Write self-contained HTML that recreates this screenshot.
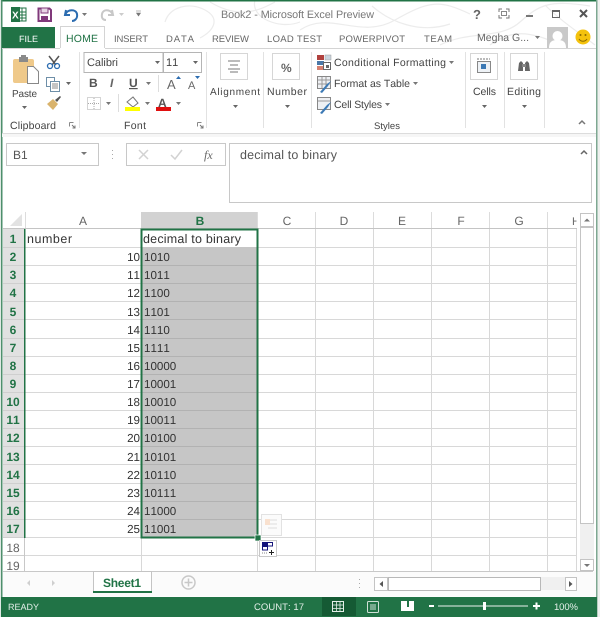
<!DOCTYPE html>
<html><head><meta charset="utf-8"><title>Book2 - Microsoft Excel Preview</title>
<style>
html,body{margin:0;padding:0;background:#fff;width:600px;height:617px;overflow:hidden}
svg{display:block;position:absolute;left:0;top:0;filter:blur(.35px)}
text{font-family:"Liberation Sans",sans-serif;font-size:11px;fill:#555;font-kerning:none;text-rendering:geometricPrecision}
.t{font-size:9.5px;fill:#666}
.r{font-size:10.5px;fill:#444}
.c{font-size:11.6px;fill:#333}
.h{font-size:12px;fill:#666;text-anchor:middle}
.rh{font-size:12px;fill:#217346;font-weight:bold;text-anchor:middle}
.s{font-size:9.5px;fill:#e4efe9}
</style></head><body>
<svg width="600" height="617" viewBox="0 0 600 617" xmlns="http://www.w3.org/2000/svg">
<rect width="600" height="617" fill="#fff"/>
<!-- outside strip -->
<rect x="597" y="0" width="3" height="617" fill="#eef0ee"/>
<rect x="0" y="0" width="1" height="617" fill="#dfe8e3"/>
<!-- title ornament -->
<g fill="none" stroke="#ececec" stroke-width="1.2">
<path d="M165 22C170 6 190 2 205 10S215 30 200 38"/>
<path d="M210 2C240 20 260 10 275 2M255 0C250 18 280 30 300 22"/>
<path d="M300 30C330 10 360 40 395 20S440 0 470 14"/>
<path d="M372 6C390 22 420 34 450 24M440 45C470 30 500 40 520 22S550 0 590 6"/>
<path d="M490 45C510 30 530 30 560 45M545 5C560 20 575 30 595 45"/>
</g>
<!-- window frame -->
<rect x="1" y="0" width="596" height="1.5" fill="#217346"/>
<rect x="1" y="0" width="1.5" height="617" fill="#4e8f6c"/>
<rect x="596" y="0" width="1.5" height="617" fill="#7ea892"/>
<!-- QAT -->
<rect x="17" y="8" width="9" height="13" fill="#fff" stroke="#217346"/>
<path d="M18 12h8M18 15h8M18 18h8M22 8v13" stroke="#217346" stroke-width="1"/>
<rect x="11" y="7" width="9" height="15" fill="#217346"/>
<text x="12" y="18.500" style="font-size:10px;font-weight:bold;fill:#fff">X</text>
<path d="M38.500 8.500h11l1.500 1.500v11h-12.500z" fill="#fff" stroke="#80397b" stroke-width="2"/><rect x="41" y="8" width="7" height="5" fill="#e8d6e6" stroke="#80397b"/><rect x="41" y="16" width="7" height="5" fill="#80397b"/>
<path d="M66 10l-1 5h5M65.500 14C68 9 76 9 77 14s-3 7-5 7" fill="none" stroke="#2b6cb0" stroke-width="2"/>
<path d="M82 13h5l-2.500 3z" fill="#777"/>
<path d="M112 10l1 5h-5M112.500 14C110 9 103 9 102 14s2 6 4 6" fill="none" stroke="#c8c8c8" stroke-width="2"/>
<path d="M119 13h5l-2.500 3z" fill="#ccc"/>
<path d="M136 11h5M136.500 13h4l-2 3z" fill="#777" stroke="#777" stroke-width=".6"/>
<text x="221" y="18" textLength="153" style="font-size:10.800px;fill:#777">Book2 - Microsoft Excel Preview</text>
<!-- window buttons -->
<text x="473" y="19" style="font-size:13px;font-weight:bold;fill:#666">?</text>
<path d="M499 12v-3h3M509 12v-3h-3M499 15v3h3M509 15v3h-3" fill="none" stroke="#777"/><rect x="501.500" y="11.500" width="5" height="4" fill="none" stroke="#888"/>
<rect x="526" y="15" width="7" height="2" fill="#777"/>
<rect x="552.500" y="10.500" width="7" height="7" fill="none" stroke="#666"/><rect x="552" y="10" width="8" height="2" fill="#666"/>
<path d="M580 10l7 7M587 10l-7 7" stroke="#555" stroke-width="2"/>
<!-- tabs -->
<rect x="2" y="27" width="53" height="21" fill="#217346"/>
<text x="19" y="42" style="font-size:9px;fill:#fff" textLength="19">FILE</text>
<path d="M60.500 48V26.500H104.500V48" fill="#fff" stroke="#d4d4d4"/>
<path d="M2 48.500H60M105 48.500H596" stroke="#d4d4d4"/>
<rect x="61" y="47" width="43" height="3" fill="#fff"/>
<text x="66" y="42" textLength="32" style="font-size:10.500px;fill:#217346">HOME</text>
<text class="t" x="114" y="42" textLength="34">INSERT</text>
<text class="t" x="166" y="42" textLength="28">DATA</text>
<text class="t" x="212" y="42" textLength="37">REVIEW</text>
<text class="t" x="267" y="42" textLength="55">LOAD TEST</text>
<text class="t" x="339" y="42" textLength="66">POWERPIVOT</text>
<text class="t" x="424" y="42" textLength="28">TEAM</text>
<text class="t" x="477" y="41" textLength="52" style="font-size:10.500px">Megha G...</text>
<path d="M535 36h5l-2.500 3z" fill="#777"/>
<rect x="547" y="27" width="21" height="21" fill="#c9c9c9"/>
<circle cx="557.500" cy="36" r="5" fill="#fff"/><path d="M549 48c0-7 4-8 8.500-8s8.500 1 8.500 8z" fill="#fff"/>
<circle cx="583" cy="37" r="7.500" fill="#f4c20d"/><circle cx="580.500" cy="35" r="1" fill="#8a6a00"/><circle cx="585.500" cy="35" r="1" fill="#8a6a00"/><path d="M579 39c2 3 6 3 8 0" fill="none" stroke="#8a6a00"/>
<!-- Clipboard -->
<rect x="13" y="59" width="21" height="24" rx="2" fill="#efc98a"/><rect x="19" y="57" width="9" height="5" fill="#8a8a8a"/><rect x="21" y="55" width="5" height="3" fill="#8a8a8a"/>
<path d="M27.500 66.500h6l5 5v12h-11z" fill="#fff" stroke="#888"/>
<text class="r" x="12" y="97" textLength="25" style="font-size:10px">Paste</text>
<path d="M22 106h5l-2.500 3z" fill="#666"/>
<path d="M49 56l7 9M59 56l-7 9" stroke="#555" stroke-width="1.500"/><circle cx="50" cy="66" r="2.500" fill="none" stroke="#2b6cb0" stroke-width="1.300"/><circle cx="57" cy="66" r="2.500" fill="none" stroke="#2b6cb0" stroke-width="1.300"/>
<rect x="46.500" y="77.500" width="8" height="9" fill="#fff" stroke="#6e8fa8"/><rect x="50.500" y="81.500" width="9" height="10" fill="#fff" stroke="#6e8fa8"/><path d="M52 84h6M52 86h6M52 88h6" stroke="#888"/>
<path d="M66 82h5l-2.500 3z" fill="#666"/>
<path d="M47 104l6-5 5 5-5 6z" fill="#d9b36c"/><path d="M55 100l5-4 1 1-4 5z" fill="#555"/>
<text class="r" x="10" y="129" textLength="46">Clipboard</text>
<path d="M69.500 122.500h4M69.500 122.500v4" stroke="#888"/><path d="M72 125l3 3M75 125.500v2.500h-2.500" fill="none" stroke="#777"/>
<path d="M79.500 52v76M206.500 52v76M263.500 52v76M311.500 52v76M465.500 52v76M504.500 52v76M544.500 52v76" stroke="#e2e2e2"/>
<!-- Font -->
<rect x="84" y="52.500" width="79" height="20" fill="#fff" stroke="#b5b5b5"/><rect x="163.500" y="52.500" width="38" height="20" fill="#fff" stroke="#b5b5b5"/>
<text class="r" x="87" y="66" textLength="31" style="font-size:11px">Calibri</text><path d="M155 61h5l-2.500 3z" fill="#666"/>
<text class="r" x="166" y="66" style="font-size:11px">11</text><path d="M193 61h5l-2.500 3z" fill="#666"/>
<text x="89" y="87" style="font-size:12px;font-weight:bold;fill:#555">B</text>
<text x="110" y="87" style="font-size:12px;font-weight:bold;font-style:italic;fill:#666">I</text>
<text x="129" y="87" style="font-size:12px;font-weight:bold;fill:#555;text-decoration:underline">U</text>
<path d="M146 82h5l-2.500 3z" fill="#777"/><path d="M158.500 75v17" stroke="#ddd"/>
<text x="167" y="89" style="font-size:13px;fill:#666">A</text><path d="M176 79h5l-2.500-3z" fill="#2b6cb0"/>
<text x="188" y="89" style="font-size:11px;fill:#666">A</text><path d="M195 76h5l-2.500 3z" fill="#2b6cb0"/>
<rect x="87.500" y="97.500" width="13" height="12" fill="none" stroke="#aaa" stroke-dasharray="1 1"/><path d="M94 98v11M88 103.500h12" stroke="#aaa" stroke-dasharray="1 1"/>
<path d="M106 102h5l-2.500 3z" fill="#777"/><path d="M118.500 94v18" stroke="#ddd"/>
<path d="M127 102l6-5 5 6-5 4z" fill="#fff" stroke="#777"/><rect x="125" y="107" width="15" height="4" fill="#ffff00"/>
<path d="M145 102h5l-2.500 3z" fill="#777"/>
<text x="158" y="107" style="font-size:12px;fill:#555;font-weight:bold">A</text><rect x="156" y="107" width="15" height="4" fill="#e01010"/>
<path d="M176 102h5l-2.500 3z" fill="#777"/>
<text class="r" x="124" y="129" textLength="22">Font</text>
<path d="M197.500 122.500h4M197.500 122.500v4" stroke="#888"/><path d="M200 125l3 3M203 125.500v2.500h-2.500" fill="none" stroke="#777"/>
<!-- Alignment -->
<rect x="220.500" y="53.500" width="27" height="26" fill="#fff" stroke="#d6d6d6"/>
<path d="M228 61h12M230 65h8M228 69h12M230 72h8" stroke="#777"/>
<text class="r" x="210" y="95" textLength="50" style="font-size:10px">Alignment</text><path d="M233 105h5l-2.500 3z" fill="#666"/>
<!-- Number -->
<rect x="272.500" y="53.500" width="27" height="26" fill="#fff" stroke="#d6d6d6"/>
<text x="281" y="72" style="font-size:12px;font-weight:bold;fill:#666">%</text>
<text class="r" x="267" y="95" textLength="40">Number</text><path d="M285 105h5l-2.500 3z" fill="#666"/>
<!-- Styles -->
<rect x="317" y="55" width="7" height="5" fill="#b0413e"/><rect x="325" y="55" width="6" height="5" fill="#c9d4de" stroke="#999" stroke-width=".5"/><rect x="317" y="61" width="7" height="4" fill="#4a78a8"/><rect x="317" y="66" width="7" height="4" fill="#d47f6f"/><rect x="323.500" y="62.500" width="7" height="7" fill="#fff" stroke="#666"/><rect x="326" y="65" width="3" height="3" fill="#666"/>
<text class="r" x="334" y="66" textLength="112">Conditional Formatting</text><path d="M449 61h5l-2.500 3z" fill="#777"/>
<rect x="317.500" y="76.500" width="13" height="12" fill="#eef0f3" stroke="#888"/><path d="M318 80h13M318 84h13M322 77v11M326 77v11" stroke="#999"/><path d="M320 92l7-8 4-3-3 5-6 7z" fill="#3b79b5"/>
<text class="r" x="334" y="87" textLength="76">Format as Table</text><path d="M413 82h5l-2.500 3z" fill="#777"/>
<rect x="317.500" y="97.500" width="13" height="12" fill="#eef0f3" stroke="#888"/><path d="M318 101h13" stroke="#999"/><path d="M320 113l7-8 4-3-3 5-6 7z" fill="#3b79b5"/>
<text class="r" x="334" y="108" textLength="48">Cell Styles</text><path d="M385 103h5l-2.500 3z" fill="#777"/>
<text class="r" x="374" y="129" textLength="26" style="font-size:9.500px">Styles</text>
<!-- Cells -->
<rect x="470.500" y="53.500" width="27" height="26" fill="#fff" stroke="#d6d6d6"/>
<rect x="477.500" y="61.500" width="13" height="11" fill="#eef2f6" stroke="#888"/><rect x="481" y="64" width="5" height="5" fill="#3b79b5"/><path d="M477 59h13" stroke="#777" stroke-dasharray="2 1"/>
<text class="r" x="473" y="95" textLength="23">Cells</text><path d="M482 105h5l-2.500 3z" fill="#666"/>
<!-- Editing -->
<rect x="510.500" y="53.500" width="27" height="26" fill="#fff" stroke="#d6d6d6"/>
<path d="M518 71l1-8 2-2 2 2v8zM525 71v-8l2-2 2 2 1 8z" fill="#666"/><rect x="522" y="64" width="4" height="3" fill="#888"/>
<text class="r" x="507" y="95" textLength="34">Editing</text><path d="M522 105h5l-2.500 3z" fill="#666"/>
<path d="M579 124l3-3 3 3" fill="none" stroke="#777" stroke-width="1.500"/>
<path d="M2 133.500H596" stroke="#dcdcdc"/>
<rect x="2" y="134" width="594" height="3" fill="#f6f6f6"/>
<!-- Formula bar -->
<rect x="6.500" y="143.500" width="92" height="22" fill="#fff" stroke="#c8c8c8"/>
<text x="13" y="159" style="font-size:12px;fill:#555">B1</text><path d="M81 152h6l-3 3z" fill="#777"/>
<path d="M112.500 150v1M112.500 154v1M112.500 158v1" stroke="#aaa"/>
<rect x="126.500" y="143.500" width="99" height="22" fill="#fff" stroke="#c8c8c8"/>
<path d="M139 150l9 9M148 150l-9 9" stroke="#d2d2d2" stroke-width="1.500"/>
<path d="M171 155l4 4 7-9" fill="none" stroke="#d2d2d2" stroke-width="1.500"/>
<text x="204" y="159" style="font-size:12px;font-style:italic;font-family:'Liberation Serif',serif;fill:#666">fx</text>
<rect x="229.500" y="143.500" width="362" height="59" fill="#fff" stroke="#c8c8c8"/>
<text x="240" y="159" textLength="97" style="font-size:12.500px;fill:#555">decimal to binary</text>
<path d="M581 154l3-3 3 3" fill="none" stroke="#666" stroke-width="1.500"/>
<!-- Column headers -->
<rect x="141" y="212" width="117" height="17" fill="#d2d2d2"/>
<path d="M22 214v12h-12z" fill="#e2e2e2"/>
<path d="M25.500 212v17M257.500 212v17M315.500 212v17M373.500 212v17M431.500 212v17M489.500 212v17M547.500 212v17" stroke="#dcdcdc"/>
<text class="h" x="83" y="225">A</text>
<text class="h" x="200" y="225" style="fill:#217346;font-weight:bold">B</text>
<text class="h" x="287" y="225">C</text><text class="h" x="344" y="225">D</text><text class="h" x="402" y="225">E</text><text class="h" x="461" y="225">F</text><text class="h" x="519" y="225">G</text>
<text class="h" x="576" y="225" style="font-size:11px">H</text>
<rect x="576.500" y="212" width="3.500" height="17" fill="#fff"/>
<!-- Row header bg -->
<rect x="3" y="229" width="21" height="309" fill="#e1e1e1"/>
<path d="M3 228.500H577" stroke="#c4c4c4"/>
<!-- Grid -->
<rect x="142" y="247" width="115" height="290" fill="#c6c6c6"/>
<g stroke="#d8d8d8" stroke-width="1">
<path d="M25 247.500H142M25 265.500H142M25 283.500H142M25 301.500H142M25 319.500H142M25 338.500H142M25 356.500H142M25 374.500H142M25 392.500H142M25 410.500H142M25 428.500H142M25 446.500H142M25 464.500H142M25 483.500H142M25 501.500H142M25 519.500H142"/>
<path d="M258 247.500H577M258 265.500H577M258 283.500H577M258 301.500H577M258 319.500H577M258 338.500H577M258 356.500H577M258 374.500H577M258 392.500H577M258 410.500H577M258 428.500H577M258 446.500H577M258 464.500H577M258 483.500H577M258 501.500H577M258 519.500H577"/>
<path d="M25 537.500H577M25 555.500H577"/>
<path d="M141.500 229V571M257.500 229V571M315.500 229V571M373.500 229V571M431.500 229V571M489.500 229V571M547.500 229V571M576.500 229V571"/>
</g>
<path d="M142 265.500H257M142 283.500H257M142 301.500H257M142 319.500H257M142 338.500H257M142 356.500H257M142 374.500H257M142 392.500H257M142 410.500H257M142 428.500H257M142 446.500H257M142 464.500H257M142 483.500H257M142 501.500H257M142 519.500H257" stroke="#b2b2b2"/>
<path d="M3 247.500H24M3 265.500H24M3 283.500H24M3 301.500H24M3 319.500H24M3 338.500H24M3 356.500H24M3 374.500H24M3 392.500H24M3 410.500H24M3 428.500H24M3 446.500H24M3 464.500H24M3 483.500H24M3 501.500H24M3 519.500H24M3 537.500H24M3 555.500H24" stroke="#cfcfcf"/>
<rect x="24" y="229" width="1.500" height="309" fill="#217346"/>
<path d="M24.500 538V571" stroke="#c8c8c8"/>
<!-- Row numbers -->
<g>
<text class="rh" x="13" y="243">1</text><text class="rh" x="13" y="261">2</text><text class="rh" x="13" y="279">3</text><text class="rh" x="13" y="297">4</text><text class="rh" x="13" y="316">5</text><text class="rh" x="13" y="334">6</text><text class="rh" x="13" y="352">7</text><text class="rh" x="13" y="370">8</text><text class="rh" x="13" y="388">9</text><text class="rh" x="13" y="406">10</text><text class="rh" x="13" y="424">11</text><text class="rh" x="13" y="442">12</text><text class="rh" x="13" y="461">13</text><text class="rh" x="13" y="479">14</text><text class="rh" x="13" y="497">15</text><text class="rh" x="13" y="515">16</text><text class="rh" x="13" y="533">17</text>
<text class="h" x="13" y="552">18</text><text class="h" x="13" y="570">19</text>
</g>
<!-- Cells -->
<text class="c" x="27" y="243" textLength="45" style="font-size:12.500px">number</text>
<text class="c" x="143" y="243" textLength="98" style="font-size:12.500px">decimal to binary</text>
<g text-anchor="end">
<text class="c" x="140" y="261">10</text><text class="c" x="140" y="279">11</text><text class="c" x="140" y="297">12</text><text class="c" x="140" y="316">13</text><text class="c" x="140" y="334">14</text><text class="c" x="140" y="352">15</text><text class="c" x="140" y="370">16</text><text class="c" x="140" y="388">17</text><text class="c" x="140" y="406">18</text><text class="c" x="140" y="424">19</text><text class="c" x="140" y="442">20</text><text class="c" x="140" y="461">21</text><text class="c" x="140" y="479">22</text><text class="c" x="140" y="497">23</text><text class="c" x="140" y="515">24</text><text class="c" x="140" y="533">25</text>
</g>
<g>
<text class="c" x="144" y="261">1010</text><text class="c" x="144" y="279">1011</text><text class="c" x="144" y="297">1100</text><text class="c" x="144" y="316">1101</text><text class="c" x="144" y="334">1110</text><text class="c" x="144" y="352">1111</text><text class="c" x="144" y="370">10000</text><text class="c" x="144" y="388">10001</text><text class="c" x="144" y="406">10010</text><text class="c" x="144" y="424">10011</text><text class="c" x="144" y="442">10100</text><text class="c" x="144" y="461">10101</text><text class="c" x="144" y="479">10110</text><text class="c" x="144" y="497">10111</text><text class="c" x="144" y="515">11000</text><text class="c" x="144" y="533">11001</text>
</g>
<!-- Selection -->
<rect x="141.500" y="229.500" width="116" height="308" fill="none" stroke="#217346" stroke-width="2"/>
<rect x="255" y="535" width="6" height="6" fill="#217346" stroke="#fff" stroke-width=".7"/>
<!-- Quick analysis ghost -->
<rect x="261.500" y="514.500" width="20" height="21" fill="#fbfbfb" stroke="#e2e2e2"/>
<path d="M266 520h11M268 524h9M268 528h9" stroke="#dcdcdc"/><rect x="265" y="519" width="5" height="6" fill="#f9e1cf"/>
<!-- Paste options -->
<rect x="259.500" y="540.500" width="17" height="16" fill="#fff" stroke="#c8c8c8"/>
<rect x="262" y="542" width="5" height="4" fill="#14147a"/><rect x="267.500" y="542.500" width="5" height="3.500" fill="#fff" stroke="#14147a"/><rect x="262.500" y="546.500" width="5" height="3.500" fill="#fff" stroke="#14147a"/>
<path d="M269 552.500h5M271.500 550v5" stroke="#222" stroke-width="1"/><path d="M262 553h5" stroke="#888" stroke-dasharray="1 1"/>
<!-- Vertical scrollbar -->
<rect x="580" y="213" width="14" height="358" fill="#f0f0f0"/>
<rect x="580.500" y="213.500" width="13" height="13" fill="#fff" stroke="#c4c4c4"/><path d="M584 221.500h6l-3-3z" fill="#777"/>
<rect x="580.500" y="227.500" width="13" height="296" fill="#fff" stroke="#c4c4c4"/>
<rect x="580.500" y="559.500" width="13" height="11" fill="#fff" stroke="#c4c4c4"/><path d="M584 564h6l-3 3z" fill="#777"/>
<!-- Sheet tabs bar -->
<rect x="3" y="571.500" width="593" height="25" fill="#fbfbfb"/>
<path d="M3 571.500H593" stroke="#c8c8c8"/>
<path d="M30 580v6l-3-3zM52 580v6l3-3z" fill="#cfcfcf"/>
<path d="M93.500 592V571.500H151.500V592" fill="#fff" stroke="#c4c4c4"/>
<rect x="93" y="591" width="59" height="2" fill="#217346"/>
<text x="103" y="587" textLength="38" style="font-size:12px;font-weight:bold;fill:#217346">Sheet1</text>
<circle cx="188.500" cy="582.500" r="6.500" fill="none" stroke="#c8c8c8" stroke-width="1.500"/><path d="M184.500 582.500h8M188.500 578.500v8" stroke="#c8c8c8" stroke-width="1.500"/>
<path d="M359.500 579v1M359.500 583v1M359.500 587v1" stroke="#aaa"/>
<rect x="388" y="577" width="189" height="13" fill="#f0f0f0"/>
<rect x="374.500" y="577.500" width="13" height="13" fill="#fff" stroke="#c4c4c4"/><path d="M383 581v6l-3.500-3z" fill="#555"/>
<rect x="388.500" y="577.500" width="152" height="13" fill="#fff" stroke="#b8b8b8"/>
<rect x="565.500" y="577.500" width="11" height="13" fill="#fff" stroke="#c4c4c4"/><path d="M569 581v6l3.500-3z" fill="#555"/>
<!-- Status bar -->
<rect x="1" y="597" width="596" height="20" fill="#217346"/>
<text class="s" x="8" y="610" textLength="31" style="font-size:9px">READY</text>
<text class="s" x="254" y="610" textLength="50">COUNT: 17</text>
<rect x="322" y="597" width="34" height="19" fill="#155a34"/>
<rect x="332.500" y="601.500" width="11" height="10" fill="none" stroke="#e4efe9"/><path d="M336.500 601v11M340 601v11M332 605h12M332 608.500h12" stroke="#e4efe9" stroke-width=".8"/>
<rect x="367.500" y="601.500" width="11" height="11" rx="1" fill="none" stroke="#cfe0d6"/><path d="M370 605h6M370 607h6M370 609h6" stroke="#cfe0d6"/>
<rect x="401" y="601" width="13" height="10" fill="#fff"/><rect x="407" y="601" width="2" height="6" fill="#217346"/>
<rect x="429" y="605" width="5" height="2" fill="#fff"/>
<rect x="438" y="605.500" width="90" height="1" fill="#eaf2ed"/>
<rect x="483" y="602" width="3" height="8" fill="#fff"/>
<path d="M533 606h7M536.500 602.500v7" stroke="#fff" stroke-width="2"/>
<text class="s" x="554" y="610" textLength="24">100%</text>
</svg>
</body></html>
